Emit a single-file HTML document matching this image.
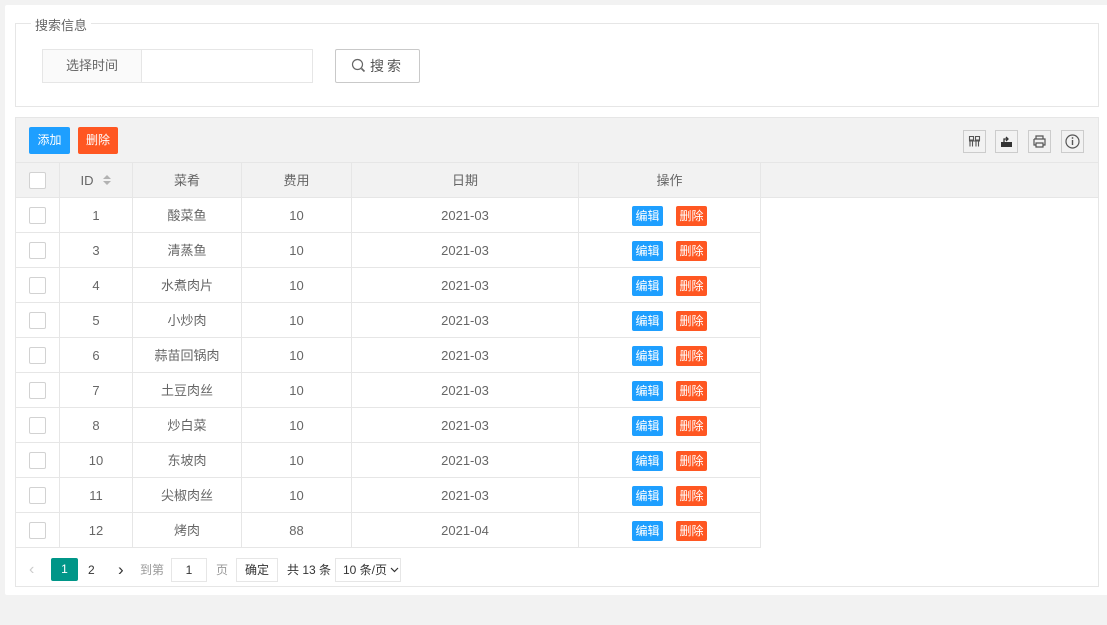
<!DOCTYPE html>
<html><head><meta charset="utf-8"><style>
*{box-sizing:border-box;margin:0;padding:0}
body{width:1107px;height:625px;background:#f2f2f2;font-family:"Liberation Sans","Noto Sans CJK SC",sans-serif;font-size:13px;color:#666;position:relative;overflow:hidden}
.a{position:absolute}
.panel{left:5px;top:5px;width:1110px;height:590px;background:#fff;border-radius:2px}
.fs{left:15px;top:23px;width:1084px;height:84px;border:1px solid #e6e6e6}
.legend{left:31px;top:15px;background:#fff;padding:0 4px;font-size:13px;color:#666}
.lbl{left:42px;top:49px;width:100px;height:34px;border:1px solid #e6e6e6;background:#fafafa;text-align:center;line-height:32px;color:#666;font-size:13px}
.inp{left:141px;top:49px;width:172px;height:34px;border:1px solid #e6e6e6;background:#fff}
.sbtn{left:335px;top:49px;width:85px;height:34px;border:1px solid #c9c9c9;background:#fff;text-align:center;line-height:32px;font-size:14px;color:#555;letter-spacing:3px;border-radius:2px}
.tbl{left:15px;top:117px;width:1084px;height:470px;border:1px solid #e6e6e6;background:#fff}
.tool{left:0;top:0;width:1082px;height:45px;background:#f2f2f2;border-bottom:1px solid #e6e6e6}
.btn{height:27px;line-height:27px;color:#fff;text-align:center;font-size:12px;border-radius:2px;top:9px}
.ic{top:12px;width:23px;height:23px;border:1px solid #ccc;background:#f2f2f2}
.hdr{left:0;top:45px;width:1082px;height:35px;background:#f2f2f2;border-bottom:1px solid #e6e6e6}
.cell{position:absolute;height:35px;line-height:35px;text-align:center;border-right:1px solid #e6e6e6;border-bottom:1px solid #e6e6e6;color:#666;font-size:13px}
.cb{position:absolute;left:13px;top:9px;width:17px;height:17px;border:1px solid #d2d2d2;background:#fff;border-radius:2px}
.sb{display:inline-block;width:31px;height:20px;line-height:20px;color:#fff;font-size:12px;border-radius:2px;vertical-align:middle;margin-top:-2px}
.pg{left:0;top:433px;width:1082px;height:36px}
.pg span{position:absolute;font-size:12px;line-height:24px;top:7px}
</style></head><body>
<div class="a panel"></div>
<div class="a fs"></div>
<div class="a legend">搜索信息</div>
<div class="a lbl">选择时间</div>
<div class="a inp"></div>
<div class="a sbtn"><svg width="16" height="16" viewBox="0 0 16 16" style="vertical-align:-3px;margin-right:3px"><circle cx="6.5" cy="6.5" r="5" fill="none" stroke="#666" stroke-width="1.2"/><path d="M10.5 10.5l3 3" stroke="#666" stroke-width="1.6"/></svg>搜索</div>
<div class="a tbl">
 <div class="a tool">
  <div class="a btn" style="left:13px;width:41px;background:#1e9fff">添加</div>
  <div class="a btn" style="left:62px;width:40px;background:#ff5722">删除</div>
  <div class="a ic" style="left:947px"><svg width="21" height="21" viewBox="0 0 21 21"><path d="M5.5 5.5h4v3.5h-4zM11.5 5.5h4v3.5h-4zM6 10.5v5M8.5 10.5v5M12 10.5v5M14.5 10.5v5M5 10h11" stroke="#555" fill="none" stroke-width="1.1"/></svg></div>
  <div class="a ic" style="left:979px"><svg width="21" height="21" viewBox="0 0 21 21"><path d="M5 11h11v5H5z" fill="#333"/><path d="M8 11V8h3M10 6l2 2-2 2" stroke="#333" fill="none" stroke-width="1.3"/></svg></div>
  <div class="a ic" style="left:1012px"><svg width="21" height="21" viewBox="0 0 21 21"><path d="M7 8V5h7v3M5 8h11v6h-2M7 14H5V8M7 12h7v4H7z" stroke="#555" fill="none" stroke-width="1.2"/></svg></div>
  <div class="a ic" style="left:1045px"><svg width="21" height="21" viewBox="0 0 21 21"><circle cx="10.5" cy="10.5" r="6.5" stroke="#555" fill="none" stroke-width="1.2"/><path d="M10.5 9v5" stroke="#555" stroke-width="1.4"/><circle cx="10.5" cy="7" r=".9" fill="#555"/></svg></div>
 </div>
 <div class="a hdr"></div>
 <div id="rows"></div>
 <div class="a pg">
  <span style="left:13px;color:#ccc;font-size:16px">&#8249;</span>
  <span style="left:35px;width:27px;height:23px;background:#009688;color:#fff;text-align:center;border-radius:2px;line-height:23px">1</span>
  <span style="left:72px;color:#333">2</span>
  <span style="left:102px;color:#333;font-size:17px">&#8250;</span>
  <span style="left:124px;color:#999">到第</span>
  <span style="left:155px;width:36px;height:24px;border:1px solid #e6e6e6;text-align:center;line-height:22px;color:#333">1</span>
  <span style="left:200px;color:#999">页</span>
  <span style="left:220px;width:42px;height:24px;border:1px solid #e6e6e6;text-align:center;line-height:22px;color:#333">确定</span>
  <span style="left:271px;color:#333">共 13 条</span>
  <span style="left:319px;width:66px;height:24px;border:1px solid #e6e6e6;line-height:22px;padding-left:7px;color:#333">10 条/页 <svg width="9" height="6" viewBox="0 0 9 6" style="vertical-align:1px"><path d="M1 1l3.5 3.5L8 1" stroke="#333" fill="none" stroke-width="1.2"/></svg></span>
 </div>
</div>
<script>
var cols=[[0,44],[44,73],[117,109],[226,110],[336,227],[563,182]];
var rows=[["1","酸菜鱼","10","2021-03"],["3","清蒸鱼","10","2021-03"],["4","水煮肉片","10","2021-03"],["5","小炒肉","10","2021-03"],["6","蒜苗回锅肉","10","2021-03"],["7","土豆肉丝","10","2021-03"],["8","炒白菜","10","2021-03"],["10","东坡肉","10","2021-03"],["11","尖椒肉丝","10","2021-03"],["12","烤肉","88","2021-04"]];
var h='';
function row(top,vals){for(var i=0;i<6;i++){h+='<div class="cell" style="top:'+top+'px;left:'+cols[i][0]+'px;width:'+cols[i][1]+'px">'+vals[i]+'</div>';}}
var sort='<svg width="10" height="12" viewBox="0 0 10 12" style="margin-left:8px;vertical-align:-1px"><path d="M1 5l4-4 4 4zM1 7l4 4 4-4z" fill="#b2b2b2"/></svg>';
row(45,['<span class="cb"></span>','ID'+sort,'菜肴','费用','日期','操作']);
rows.forEach(function(r,k){row(80+k*35,['<span class="cb"></span>',r[0],r[1],r[2],r[3],'<span class="sb" style="background:#1e9fff">编辑</span><span class="sb" style="background:#ff5722;margin-left:13px">删除</span>']);});
document.getElementById('rows').innerHTML=h;
</script>
</body></html>
